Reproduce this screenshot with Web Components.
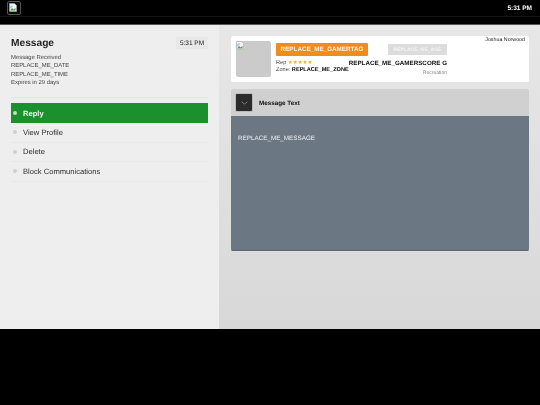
<!DOCTYPE html>
<html lang="en">
<head>
<meta charset="utf-8">
<title>Message</title>
<style>
  html, body { margin: 0; background: #000; }
  body { font-family: "Liberation Sans", Arial, sans-serif; width: 540px; height: 405px; overflow: hidden; text-rendering: geometricPrecision; filter: blur(.2px); }
</style>
</head>
<body>
<top-bar time="5:31 PM"></top-bar>
<main-view>
  <message-side slot="side" heading="Message" time="5:31 PM">
    <span>Message Received</span>
    <span>REPLACE_ME_DATE</span>
    <span>REPLACE_ME_TIME</span>
    <span>Expires in 29 days</span>
    <menu-item slot="menu" active>Reply</menu-item>
    <menu-item slot="menu">View Profile</menu-item>
    <menu-item slot="menu">Delete</menu-item>
    <menu-item slot="menu">Block Communications</menu-item>
  </message-side>
  <profile-card slot="main"></profile-card>
  <message-box slot="main" label="Message Text">REPLACE_ME_MESSAGE</message-box>
</main-view>

<script>
const brokenImg = `<svg width="8" height="9" viewBox="0 0 8 9" aria-hidden="true">
  <path d="M.5.5h5l2 2v6h-7z" fill="#f4f4f4" stroke="#a9a9a9" stroke-width=".6"/>
  <path d="M1 7.5l2-2.5 1.5 1.5 2-1.5v2.500z" fill="#4f9e4a"/>
  <path d="M1 3.500l2-1.500 1 2-3 1.500z" fill="#a9c7ee"/>
</svg>`;

class TopBar extends HTMLElement {
  constructor() {
    super();
    this.attachShadow({ mode: "open" });
  }
  connectedCallback() {
    this.shadowRoot.innerHTML = `
    <style>
      :host { display: block; height: 25px; background: #000; box-sizing: border-box; border-bottom: 1px solid #555; }
      .row { height: 17px; border-bottom: 1px solid #141414; display: flex; align-items: flex-start; justify-content: space-between; padding: 1px 8px 1px 7px; box-sizing: border-box; }
      .tile { width: 14px; height: 14px; box-sizing: border-box; border: 1px solid #555; border-radius: 2px; background: #0a0a0a; display: flex; padding: 1px; }
      .time { color: #fff; font-size: 6.5px; font-weight: bold; line-height: 15px; }
    </style>
    <div class="row">
      <div class="tile">${brokenImg}</div>
      <div class="time">${this.getAttribute("time")}</div>
    </div>`;
  }
}
customElements.define("top-bar", TopBar);

class MainView extends HTMLElement {
  constructor() {
    super();
    this.attachShadow({ mode: "open" });
    this.shadowRoot.innerHTML = `
    <style>
      :host { display: flex; height: 304px; }
      .side { display: block; width: 219px; flex: none; background: #eeeeee; }
      .main { flex: 1; display: flex; flex-direction: column; gap: 7px; padding: 11px 11px 0 12px; background: linear-gradient(#e7e7e7, #d8d8d8); }
    </style>
    <div class="side"><slot name="side"></slot></div>
    <div class="main"><slot name="main"></slot></div>`;
  }
}
customElements.define("main-view", MainView);

class MessageSide extends HTMLElement {
  constructor() {
    super();
    this.attachShadow({ mode: "open" });
  }
  connectedCallback() {
    this.shadowRoot.innerHTML = `
    <style>
      :host { display: block; padding: 12px 11px 0; color: #333; }
      header { display: flex; justify-content: space-between; align-items: flex-start; height: 16px; }
      h1 { margin: 0; font-size: 10.200px; line-height: 14px; font-weight: bold; color: #1f1f1f; }
      .chip { background: #e8e8e8; font-size: 6.5px; line-height: 13px; height: 12px; width: 32px; text-align: center; color: #222; border-radius: 1px; }
      .meta { display: flex; flex-direction: column; font-size: 5.900px; line-height: 8.3px; color: #444; height: 43px; padding-top: 1px; border-bottom: 1px solid #e4e4e4; }
      ::slotted(span) { display: block; }
      .menu { margin-top: 5px; display: flex; flex-direction: column; }
    </style>
    <header><h1>${this.getAttribute("heading")}</h1><div class="chip">${this.getAttribute("time")}</div></header>
    <div class="meta"><slot></slot></div>
    <div class="menu"><slot name="menu"></slot></div>`;
  }
}
customElements.define("message-side", MessageSide);

class MenuItem extends HTMLElement {
  constructor() {
    super();
    this.attachShadow({ mode: "open" });
    this.shadowRoot.innerHTML = `
    <style>
      :host { display: flex; align-items: center; height: 19.500px; box-sizing: border-box; border-bottom: 1px solid #e8e8e8; font-size: 7.600px; color: #2c2c2c; padding-left: 2px; }
      :host([active]) { background: #1a912d; color: #eef9ec; font-weight: bold; border: 0; height: 20px; }
      i { width: 4px; height: 4px; border-radius: 50%; background: #cfcfcf; margin-right: 6px; flex: none; }
      :host([active]) i { background: #b9e4b5; }
    </style>
    <i></i><slot></slot>`;
  }
}
customElements.define("menu-item", MenuItem);

class ProfileCard extends HTMLElement {
  constructor() {
    super();
    this.attachShadow({ mode: "open" });
    this.shadowRoot.innerHTML = `
    <style>
      :host { display: flex; height: 46px; box-sizing: border-box; padding: 5px 4px 5px 5px; background: #fff; border-radius: 2px; gap: 5px; color: #222; }
      .avatar { width: 35px; height: 36px; flex: none; background: #cbcbcb; border-radius: 2px; line-height: 0; }
      .info { width: 171px; flex: none; display: flex; flex-direction: column; padding-top: 2px; }
      .top, .bottom { display: flex; justify-content: space-between; }
      .tag { width: 92px; height: 13px; background: #f08c1c; color: #fdf3e3; font-size: 6.300px; font-weight: bold; line-height: 13px; text-align: center; border-radius: 1px; white-space: nowrap; }
      .age { width: 59px; height: 11px; margin-top: 1px; background: #dcdcdc; color: #f4f4f4; font-size: 5px; font-weight: bold; line-height: 12px; text-align: center; border-radius: 1px; }
      .bottom { margin-top: 4px; }
      .left { font-size: 5.600px; line-height: 6.500px; color: #444; white-space: nowrap; }
      .left b { color: #000; }
      .stars { color: #efb21d; font-size: 5.500px; }
      .right { text-align: right; }
      .score { font-size: 6.250px; font-weight: bold; color: #111; line-height: 8px; white-space: nowrap; }
      .sub { font-size: 5px; color: #888; line-height: 6px; margin-top: 2px; }
      .name { flex: 1; text-align: right; font-size: 5.300px; line-height: 6px; color: #222; margin-top: -4px; }
    </style>
    <div class="avatar">${brokenImg}</div>
    <div class="info">
      <div class="top"><div class="tag">REPLACE_ME_GAMERTAG</div><div class="age">REPLACE_ME_AGE</div></div>
      <div class="bottom">
        <div class="left">
          <div>Rep <span class="stars">★★★★★</span></div>
          <div>Zone: <b>REPLACE_ME_ZONE</b></div>
        </div>
        <div class="right">
          <div class="score">REPLACE_ME_GAMERSCORE G</div>
          <div class="sub">Recreation</div>
        </div>
      </div>
    </div>
    <div class="name">Joshua Norwood</div>`;
  }
}
customElements.define("profile-card", ProfileCard);

class MessageBox extends HTMLElement {
  constructor() {
    super();
    this.attachShadow({ mode: "open" });
  }
  connectedCallback() {
    this.shadowRoot.innerHTML = `
    <style>
      :host { display: block; border-radius: 2px; overflow: hidden; }
      .head { height: 27px; background: #d0d0d0; display: flex; align-items: center; gap: 6px; padding-left: 4px; font-size: 6.300px; font-weight: bold; color: #111; }
      .head span { margin-top: 1px; }
      .btn { width: 18px; height: 19px; background: #2b2b2b; border: 1px solid #bbb; box-sizing: border-box; border-radius: 2px; display: flex; align-items: center; justify-content: center; }
      .body { height: 135px; box-sizing: border-box; background: #6b7783; border-bottom: 1px solid #5d6873; padding: 18px 7px; color: #eef0f2; font-size: 6.300px; line-height: 9px; }
    </style>
    <div class="head">
      <div class="btn"><svg width="7" height="4" viewBox="0 0 7 4" aria-hidden="true"><path d="M.5.800L3.500 3 6.500.800" fill="none" stroke="#9a9a9a" stroke-width=".7"/></svg></div>
      <span>${this.getAttribute("label")}</span>
    </div>
    <div class="body"><slot></slot></div>`;
  }
}
customElements.define("message-box", MessageBox);
</script>
</body>
</html>
